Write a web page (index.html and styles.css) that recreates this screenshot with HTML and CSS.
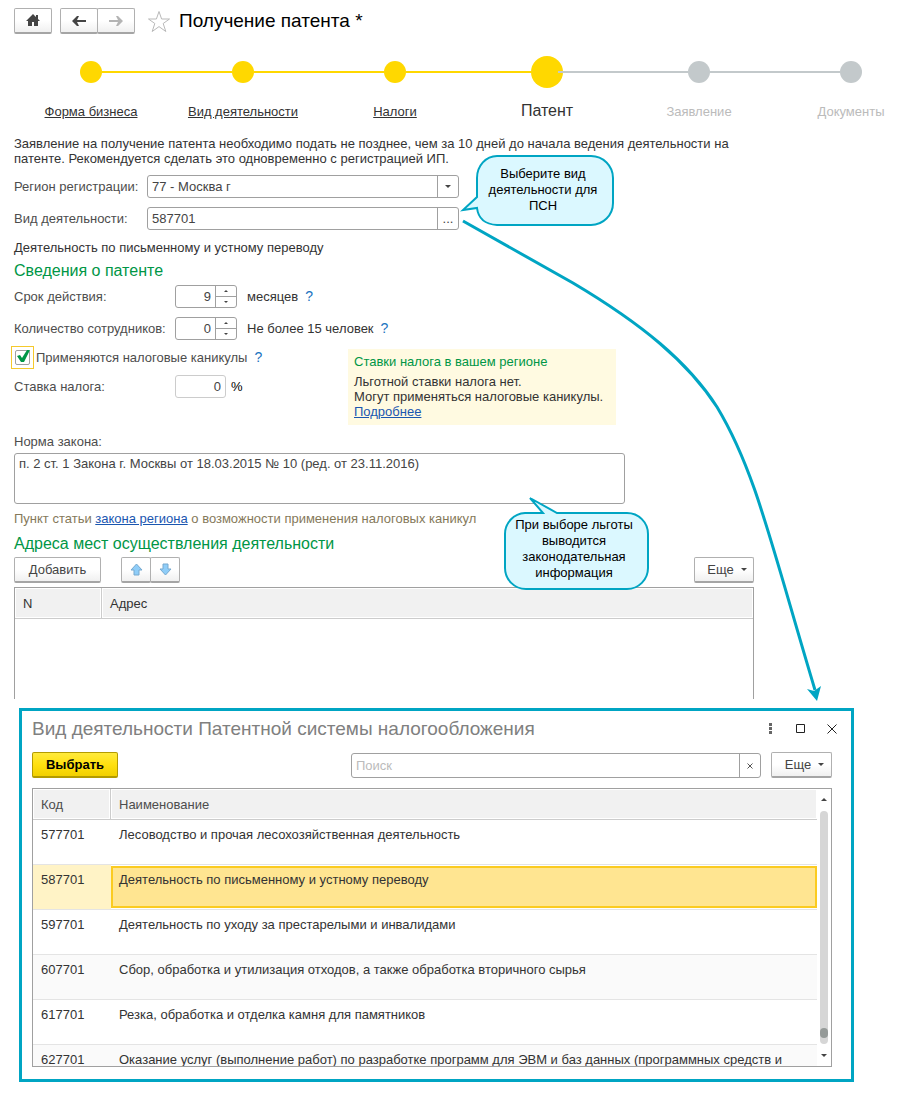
FILE: index.html
```
<!DOCTYPE html>
<html lang="ru">
  <head>
    <meta charset="utf-8">
    <meta name="viewport" content="width=device-width, initial-scale=1.0">
    <title>Получение патента</title>
    <link rel="stylesheet" href="styles.css">
  </head>

  <body>
    <header class="topbar">
      <button class="btn btn-home" aria-label="Домой">
        <svg width="14" height="13" viewBox="0 0 14 13"><path d="M7 0 0 7h2v5h4V8h2v4h4V7h2l-2-2V1h-2v2z" fill="#444"/></svg>
      </button>
      <div class="btn-group">
        <button class="btn" aria-label="Назад">
          <svg width="14" height="10" viewBox="0 0 14 10"><path d="M0 5 5 0h2L5 4h9v2H5l2 4H5z" fill="#444"/></svg>
        </button>
        <button class="btn" aria-label="Вперед">
          <svg width="14" height="10" viewBox="0 0 14 10"><path d="M14 5 9 0H7l2 4H0v2h9l-2 4h2z" fill="#b4b4b4"/></svg>
        </button>
      </div>
      <svg class="star" width="24" height="23" viewBox="0 0 24 23"><path d="M12 1.500 14.600 9H22.500L16.200 13.500 18.800 21.500 12 16.600 5.200 21.500 7.800 13.500 1.500 9H9.400z" fill="none" stroke="#b9b9b9"/></svg>
      <h1>Получение патента *</h1>
    </header>

    <nav class="steps">
      <a href="#" class="step"><span class="dot"></span><span class="step-name">Форма бизнеса</span></a>
      <span class="line"></span>
      <a href="#" class="step"><span class="dot"></span><span class="step-name">Вид деятельности</span></a>
      <span class="line"></span>
      <a href="#" class="step"><span class="dot"></span><span class="step-name">Налоги</span></a>
      <span class="line"></span>
      <span class="step current"><span class="dot"></span><span class="step-name">Патент</span></span>
      <span class="line next"></span>
      <span class="step next"><span class="dot"></span><span class="step-name">Заявление</span></span>
      <span class="line next"></span>
      <span class="step next"><span class="dot"></span><span class="step-name">Документы</span></span>
    </nav>

    <main>
      <p class="intro">Заявление на получение патента необходимо подать не позднее, чем за 10 дней до начала ведения деятельности на патенте. Рекомендуется сделать это одновременно с регистрацией ИП.</p>

      <div class="row">
        <label for="region" class="name">Регион регистрации:</label>
        <div class="field">
          <select id="region"><option>77 - Москва г</option></select>
          <span class="side"><i class="caret"></i></span>
        </div>
      </div>
      <div class="row">
        <label for="kind" class="name">Вид деятельности:</label>
        <div class="field">
          <input id="kind" type="text" value="587701">
          <button class="side">...</button>
        </div>
      </div>
      <p class="kind-text">Деятельность по письменному и устному переводу</p>

      <h2>Сведения о патенте</h2>
      <div class="patent">
        <div class="patent-form">
          <div class="row">
            <label for="term" class="name wide">Срок действия:</label>
            <div class="field spin">
              <input id="term" type="text" value="9">
              <div class="arrows"><button aria-label="Больше"><i class="caret up"></i></button><button aria-label="Меньше"><i class="caret"></i></button></div>
            </div>
            <span class="after">месяцев</span><a href="#" class="help">?</a>
          </div>
          <div class="row">
            <label for="staff" class="name wide">Количество сотрудников:</label>
            <div class="field spin">
              <input id="staff" type="text" value="0">
              <div class="arrows"><button aria-label="Больше"><i class="caret up"></i></button><button aria-label="Меньше"><i class="caret"></i></button></div>
            </div>
            <span class="after">Не более 15 человек</span><a href="#" class="help">?</a>
          </div>
          <div class="row check-row">
            <span class="check"><input id="holidays" type="checkbox" checked><svg width="15" height="17" viewBox="0 0 15 17"><path d="M2 7 5 6 7 9 12 1H15L9 13H6z" fill="#009646"/></svg></span>
            <label for="holidays">Применяются налоговые каникулы</label><a href="#" class="help">?</a>
          </div>
          <div class="row">
            <label for="rate" class="name wide">Ставка налога:</label>
            <div class="field rate"><input id="rate" type="text" value="0" readonly></div>
            <span class="percent">%</span>
          </div>
        </div>
        <aside class="rates">
          <h3>Ставки налога в вашем регионе</h3>
          <p>Льготной ставки налога нет.<br>Могут применяться налоговые каникулы.<br><a href="#">Подробнее</a></p>
        </aside>
      </div>

      <label for="law" class="law-name">Норма закона:</label>
      <textarea id="law">п. 2 ст. 1 Закона г. Москвы от 18.03.2015 № 10 (ред. от 23.11.2016)</textarea>
      <p class="hint">Пункт статьи <a href="#">закона региона</a> о возможности применения налоговых каникул</p>

      <h2>Адреса мест осуществления деятельности</h2>
      <div class="commands">
        <button class="btn btn-add">Добавить</button>
        <div class="btn-group small">
          <button class="btn" aria-label="Вверх"><svg width="13" height="13" viewBox="0 0 13 13"><path d="M6.500 1 12 7H9V12H4V7H1z" fill="#8fcdf8" stroke="#76a9cf"/></svg></button>
          <button class="btn" aria-label="Вниз"><svg width="13" height="13" viewBox="0 0 13 13"><path d="M6.500 12 12 6H9V1H4V6H1z" fill="#8fcdf8" stroke="#76a9cf"/></svg></button>
        </div>
        <button class="btn btn-more">Еще <i class="caret"></i></button>
      </div>
      <div class="address">
        <table>
          <thead><tr><th class="num">N</th><th>Адрес</th></tr></thead>
        </table>
      </div>
    </main>

    <section class="dialog">
      <div class="dialog-head">
        <h2>Вид деятельности Патентной системы налогообложения</h2>
        <button aria-label="Меню"><svg width="5" height="12" viewBox="0 0 5 12"><path d="M1 0h3v3H1zM1 4h3v3H1zM1 8h3v3H1z" fill="#666"/></svg></button>
        <button aria-label="Развернуть"><svg width="10" height="10" viewBox="0 0 10 10"><path d="M.5.5h8v8h-8z" fill="none" stroke="#222"/></svg></button>
        <button aria-label="Закрыть"><svg width="10" height="10" viewBox="0 0 10 10"><path d="M.5.5l9 9M9.500.5l-9 9" stroke="#222"/></svg></button>
      </div>
      <div class="dialog-bar">
        <button class="btn btn-choose">Выбрать</button>
        <div class="field search">
          <input type="text" placeholder="Поиск" aria-label="Поиск">
          <button class="side" aria-label="Очистить"><svg width="6" height="6" viewBox="0 0 6 6"><path d="M.5.5l5 5M5.500.5l-5 5" stroke="#555"/></svg></button>
        </div>
        <button class="btn btn-more">Еще <i class="caret"></i></button>
      </div>
      <div class="list">
        <div class="list-rows">
          <table>
            <thead><tr><th class="code">Код</th><th>Наименование</th></tr></thead>
            <tbody>
              <tr><td>577701</td><td>Лесоводство и прочая лесохозяйственная деятельность</td></tr>
              <tr class="selected"><td>587701</td><td>Деятельность по письменному и устному переводу</td></tr>
              <tr><td>597701</td><td>Деятельность по уходу за престарелыми и инвалидами</td></tr>
              <tr class="even"><td>607701</td><td>Сбор, обработка и утилизация отходов, а также обработка вторичного сырья</td></tr>
              <tr><td>617701</td><td>Резка, обработка и отделка камня для памятников</td></tr>
              <tr class="even"><td>627701</td><td>Оказание услуг (выполнение работ) по разработке программ для ЭВМ и баз данных (программных средств и</td></tr>
            </tbody>
          </table>
        </div>
        <div class="scroll">
          <i class="caret up"></i>
          <div class="track"><div class="thumb"></div></div>
          <i class="caret"></i>
        </div>
      </div>
    </section>

    <!-- callouts over the form -->
    <svg class="marks" width="910" height="720" viewBox="0 0 910 720">
      <path d="M497 156H591A22 22 0 0 1 613 178V203A22 22 0 0 1 591 225H497Q479 224 477 208L463 210 477 197V178A20 22 0 0 1 497 156z" class="bubble"/>
      <path d="M525 513H543L530 498 557 513H627A21 21 0 0 1 648 534V568A21 21 0 0 1 627 589H526A21 21 0 0 1 505 568V534A21 21 0 0 1 525 513z" class="bubble"/>
      <path d="M463 221 573 283C642 324 688 362 717 407C755 470 770 540 815 690" class="arrow"/>
      <path d="M817 701 807 689 814 691 821 686z" class="arrow-head"/>
    </svg>
    <p class="note note-kind">Выберите вид деятельности для ПСН</p>
    <p class="note note-law">При выборе льготы выводится законодательная информация</p>
  </body>
</html>
```
FILE: styles.css
```
* {
  box-sizing: border-box;
}

body {
  margin: 0;
  position: relative;
  background-color: #fff;
  color: #333;
  font-family: "Liberation Sans", Arial, sans-serif;
  font-size: 13px;
  line-height: 15px;
}

h1, h2, h3, p {
  margin: 0;
  font-weight: normal;
}

h1 {
  color: #000;
  font-size: 19px;
  line-height: 24px;
}

h2 {
  color: #009646;
  font-size: 16px;
  line-height: 20px;
}

a {
  color: #1a56b0;
}

button, input, select, textarea {
  font: inherit;
  color: #444;
}

button {
  padding: 0;
  border: 0;
  background: none;
  display: flex;
  align-items: center;
  justify-content: center;
}

.topbar {
  display: flex;
  align-items: center;
  padding: 8px 14px 0;
}

.btn {
  height: 26px;
  border: 1px solid #b0b0b0;
  border-bottom: 2px solid #a5a5a5;
  border-radius: 2px;
  background: linear-gradient(#fff, #fff 50%, #f0f0f0);
}

.btn-home {
  width: 38px;
  margin-right: 8px;
}

.btn-group {
  display: flex;
}

.btn-group .btn {
  width: 38px;
}

.btn-group .btn + .btn {
  margin-left: -1px;
}

.btn-group.small .btn {
  width: 30px;
}

.star {
  margin: 0 8px 0 12px;
}

/* шаги */

.steps {
  display: flex;
  padding: 22px 48px 0 80px;
}

.step {
  width: 22px;
  display: flex;
  flex-direction: column;
  align-items: center;
  color: #333;
  white-space: nowrap;
}

.dot {
  flex: none;
  width: 22px;
  height: 22px;
  margin: 5px 0 16px;
  border-radius: 50%;
  background-color: #ffd800;
}

.step-name {
  line-height: 18px;
  padding-top: 4px;
}

.line {
  flex: 1;
  height: 2px;
  margin-top: 15px;
  background-color: #ffd800;
}

.current .dot {
  width: 32px;
  height: 32px;
  margin: 0 0 11px;
}

.current .step-name {
  font-size: 16px;
  padding: 0;
  line-height: 24px;
}

.next {
  color: #bbb;
}

.line.next, .next .dot {
  background-color: #c3c9cb;
}

/* форма */

main {
  max-width: 754px;
  padding: 13px 0 0 14px;
}

.intro {
  margin-bottom: 9px;
}

.row {
  display: flex;
  align-items: center;
  height: 23px;
  margin-bottom: 9px;
  color: #4d4d4d;
  white-space: nowrap;
}

.name {
  flex: none;
  width: 133px;
}

.wide {
  width: 161px;
}

.field {
  display: flex;
  width: 312px;
  height: 23px;
  border: 1px solid #a0a0a0;
  border-radius: 3px;
  background-color: #fff;
}

.field input, .field select {
  flex: 1;
  min-width: 0;
  padding: 0 4px;
  border: 0;
  background: none;
  appearance: none;
  outline: 0;
}

.side {
  width: 21px;
  border-left: 1px solid #a0a0a0;
  display: flex;
  align-items: center;
  justify-content: center;
}

.caret {
  border: 3px solid transparent;
  border-top-color: #444;
  border-bottom: 0;
}

.caret.up {
  border-top: 0;
  border-bottom: 3px solid #444;
}

.kind-text {
  margin: 10px 0 6px;
}

.patent {
  display: flex;
  margin-top: 4px;
}

.patent-form {
  flex: none;
  width: 334px;
}

.field.spin {
  flex: none;
  width: 62px;
}

.spin input, .rate input {
  text-align: right;
}

.arrows {
  width: 21px;
  border-left: 1px solid #a0a0a0;
}

.arrows button {
  width: 100%;
  height: 10px;
}

.arrows button + button {
  height: 11px;
  border-top: 1px solid #a0a0a0;
}

.arrows .caret {
  border-width: 2px;
}

.arrows .caret.up {
  border-top: 0;
}

.arrows .caret:not(.up) {
  border-bottom: 0;
}

.after {
  margin-left: 10px;
  color: #333;
}

.help {
  margin-left: 7px;
  color: #1a73c0;
  font-size: 14px;
  text-decoration: none;
}

.check-row {
  margin: -3px 0 6px -3px;
}

.check {
  width: 23px;
  height: 23px;
  margin-right: 2px;
  display: grid;
  place-items: center;
  border: 1px solid #f5c92c;
}

.check input {
  grid-area: 1 / 1;
  width: 15px;
  height: 15px;
  margin: 0;
  border: 1px solid #a0a0a0;
  border-radius: 2px;
  appearance: none;
}

.check svg {
  grid-area: 1 / 1;
  pointer-events: none;
}

.rate {
  width: 51px;
  border-color: #ccc;
}

.percent {
  margin-left: 5px;
  color: #000;
}

.rates {
  align-self: flex-end;
  width: 268px;
  height: 76px;
  margin-bottom: -18px;
  padding: 5px 6px;
  background-color: #fffae1;
  white-space: nowrap;
}

.rates h3 {
  margin-bottom: 5px;
  color: #009646;
  font-size: 13px;
}

.law-name {
  display: block;
  margin: 27px 0 4px;
  color: #4d4d4d;
}

textarea {
  display: block;
  width: 100%;
  max-width: 611px;
  height: 51px;
  padding: 2px 4px;
  border: 1px solid #a0a0a0;
  border-radius: 3px;
  resize: none;
}

.hint {
  margin: 7px 0 8px;
  color: #85795a;
}

.commands {
  display: flex;
  margin: 3px 0 4px;
}

.btn-add {
  width: 87px;
  margin-right: 20px;
}

.btn-more {
  width: 60px;
  margin-left: auto;
  padding-left: 6px;
  gap: 7px;
}

.address {
  height: 112px;
  border: 1px solid #a0a0a0;
  border-bottom: 0;
}

table {
  width: 100%;
  border-collapse: separate;
  border-spacing: 0;
  table-layout: fixed;
}

th {
  height: 31px;
  padding: 0 8px;
  border-bottom: 1px solid #ccc;
  background-color: #f1f1f1;
  box-shadow: inset 0 0 0 1px #fff;
  font-weight: normal;
  text-align: left;
}

.num {
  width: 87px;
  border-right: 1px solid #ccc;
}

/* окно выбора */

.dialog {
  margin: 9px 56px 16px 19px;
  padding: 8px 19px 12px 10px;
  border: 3px solid #00a5c3;
  background-color: #fff;
}

.dialog-head {
  display: flex;
  align-items: center;
  height: 20px;
}

.dialog-head h2 {
  flex: 1;
  color: #808080;
  font-size: 19px;
}

.dialog-head button {
  width: 10px;
  height: 20px;
  margin-left: 21px;
}

.dialog-head button:last-child {
  margin-right: -5px;
}

.dialog-bar {
  display: flex;
  margin: 13px 0 10px;
}

.btn-choose {
  width: 86px;
  border-color: #b39b00;
  background: linear-gradient(#ffea3c, #ffe010 50%, #f2d000);
  color: #000;
  font-weight: bold;
}

.search {
  flex: 1;
  max-width: 410px;
  height: 25px;
  margin: 1px 10px 0 auto;
}

.search input::placeholder {
  color: #bbb;
}

.dialog .btn-more {
  width: 61px;
  margin-left: 0;
}

.list {
  display: flex;
  height: 279px;
  border: 1px solid #a0a0a0;
}

.list-rows {
  flex: 1;
  min-width: 0;
  overflow: hidden;
}

.list th {
  color: #4d4d4d;
}

.code {
  width: 78px;
  border-right: 1px solid #ccc;
}

.list td {
  height: 45px;
  padding: 7px 8px;
  border-bottom: 1px solid #e4e4e4;
  vertical-align: top;
  white-space: nowrap;
}

.even td {
  background-color: #fafafa;
}

.list .selected td {
  background-color: #fff3c6;
}

.list .selected td + td {
  background-color: #ffe591;
  box-shadow: inset 0 1px #fff, inset 0 -1px #fff, inset 2px 0 #fbcb20, inset -2px 0 #fbcb20, inset 0 3px #fbcb20, inset 0 -3px #fbcb20;
}

.scroll {
  width: 14px;
  padding: 9px 0;
  display: flex;
  flex-direction: column;
  align-items: center;
  gap: 10px;
}

.track {
  flex: 1;
  width: 8px;
  display: flex;
  align-items: flex-end;
  padding-bottom: 6px;
  border-radius: 4px;
  background-color: #d6d6d6;
}

.thumb {
  width: 8px;
  height: 10px;
  border-radius: 4px;
  background-color: #959a98;
}

/* выноски поверх формы */

.marks {
  position: absolute;
  top: 0;
  left: 0;
  pointer-events: none;
}

.bubble {
  fill: #dbf8ff;
  stroke: #00a5c3;
  stroke-width: 2;
}

.arrow {
  fill: none;
  stroke: #00a5c3;
  stroke-width: 3;
}

.arrow-head {
  fill: #00a5c3;
}

.note {
  position: absolute;
  color: #000;
  line-height: 16px;
  text-align: center;
}

.note-kind {
  top: 166px;
  left: 485px;
  width: 116px;
}

.note-law {
  top: 517px;
  left: 512px;
  width: 124px;
}
```
